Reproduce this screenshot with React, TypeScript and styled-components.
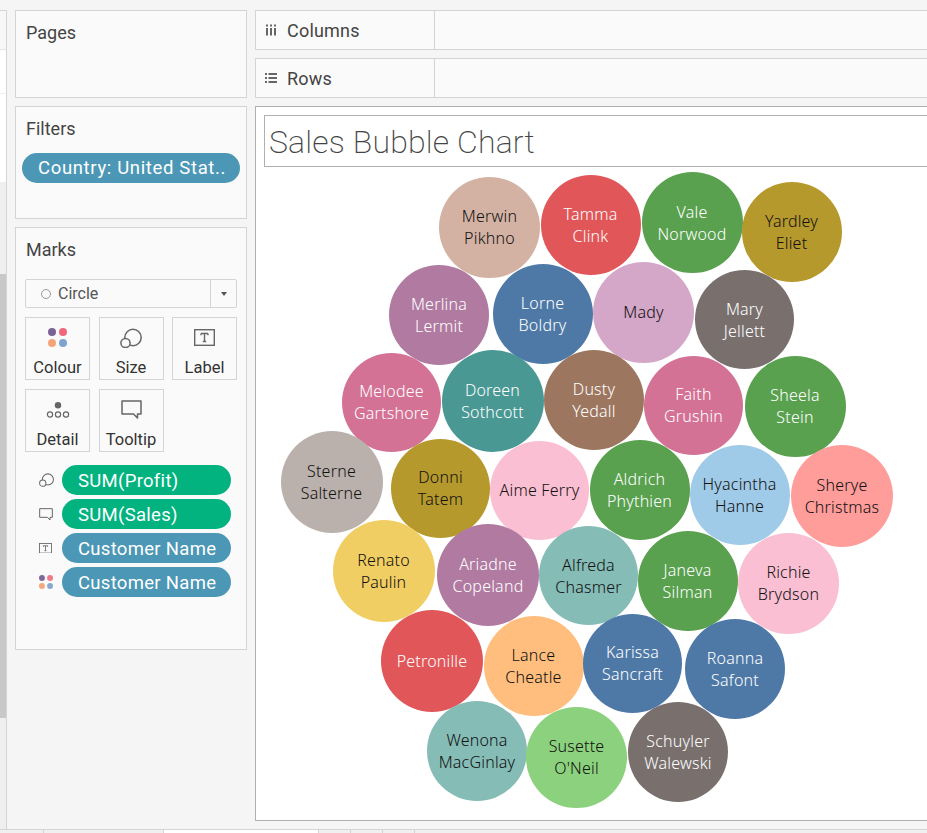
import React from "react";
import styled, { createGlobalStyle } from "styled-components";

const uiFont = `Roboto, "Liberation Sans", sans-serif`;
const chartFont = `"Noto Sans", "Open Sans", sans-serif`;

const GlobalStyle = createGlobalStyle`
	html, body {
		margin: 0;
		padding: 0;
		height: 100%;
		overflow: hidden;
		background: #f5f5f5;
	}
	* {
		box-sizing: border-box;
	}
`;

interface IBubble {
	name: string[];
	x: number;
	y: number;
	d: number;
	fill: string;
	dark?: boolean;
}

// x, y are the centres in page pixels; the chart origin is subtracted below
const bubbles: IBubble[] = [
	{ name: ["Merwin", "Pikhno"], x: 489.5, y: 227, d: 101, fill: "#d4b2a3", dark: true },
	{ name: ["Tamma", "Clink"], x: 590.5, y: 224.5, d: 100, fill: "#e15759" },
	{ name: ["Vale", "Norwood"], x: 692, y: 222.5, d: 101, fill: "#59a14f" },
	{ name: ["Yardley", "Eliet"], x: 791.5, y: 232, d: 100, fill: "#b6992d", dark: true },
	{ name: ["Merlina", "Lermit"], x: 439, y: 314.5, d: 100, fill: "#b07aa1" },
	{ name: ["Lorne", "Boldry"], x: 542.5, y: 313.5, d: 100, fill: "#4e79a7" },
	{ name: ["Mady"], x: 643.5, y: 312, d: 101, fill: "#d4a6c8", dark: true },
	{ name: ["Mary", "Jellett"], x: 744.5, y: 319.5, d: 99, fill: "#79706e" },
	{ name: ["Melodee", "Gartshore"], x: 391.5, y: 402, d: 99, fill: "#d37295" },
	{ name: ["Doreen", "Sothcott"], x: 492.5, y: 401, d: 102, fill: "#499894" },
	{ name: ["Dusty", "Yedall"], x: 594, y: 399.5, d: 100, fill: "#9d7660" },
	{ name: ["Faith", "Grushin"], x: 693.5, y: 405, d: 99, fill: "#d37295" },
	{ name: ["Sheela", "Stein"], x: 795, y: 406, d: 101, fill: "#59a14f" },
	{ name: ["Sterne", "Salterne"], x: 331.5, y: 482, d: 102, fill: "#bab0ac", dark: true },
	{ name: ["Donni", "Tatem"], x: 440.5, y: 488, d: 99, fill: "#b6992d", dark: true },
	{ name: ["Aime Ferry"], x: 539.5, y: 490, d: 99, fill: "#fabfd2", dark: true },
	{ name: ["Aldrich", "Phythien"], x: 639.5, y: 490, d: 100, fill: "#59a14f" },
	{ name: ["Hyacintha", "Hanne"], x: 739.5, y: 495, d: 100, fill: "#a0cbe8", dark: true },
	{ name: ["Sherye", "Christmas"], x: 842, y: 495.5, d: 102, fill: "#ff9d9a", dark: true },
	{ name: ["Renato", "Paulin"], x: 383.5, y: 570.5, d: 102, fill: "#f1ce63", dark: true },
	{ name: ["Ariadne", "Copeland"], x: 488, y: 575, d: 102, fill: "#b07aa1" },
	{ name: ["Alfreda", "Chasmer"], x: 588.5, y: 575.5, d: 99, fill: "#86bcb6", dark: true },
	{ name: ["Janeva", "Silman"], x: 687.5, y: 581, d: 100, fill: "#59a14f" },
	{ name: ["Richie", "Brydson"], x: 788.5, y: 583, d: 101, fill: "#fabfd2", dark: true },
	{ name: ["Petronille"], x: 432, y: 661, d: 102, fill: "#e15759" },
	{ name: ["Lance", "Cheatle"], x: 533.5, y: 666, d: 100, fill: "#ffbe7d", dark: true },
	{ name: ["Karissa", "Sancraft"], x: 632.5, y: 663, d: 99, fill: "#4e79a7" },
	{ name: ["Roanna", "Safont"], x: 735, y: 668.5, d: 100, fill: "#4e79a7" },
	{ name: ["Wenona", "MacGinlay"], x: 477, y: 750.5, d: 100, fill: "#86bcb6", dark: true },
	{ name: ["Susette", "O'Neil"], x: 576.5, y: 757, d: 101, fill: "#8cd17d", dark: true },
	{ name: ["Schuyler", "Walewski"], x: 678, y: 751.5, d: 100, fill: "#79706e" },
];

const CHART_LEFT = 256;
const CHART_TOP = 167;

const ColourDots = ({ size = 19, muted }: { size?: number; muted?: boolean }) => (
	<svg width={size} height={size} viewBox="0 0 19 19">
		<circle cx="4" cy="4" r="4" fill={muted ? "#80699a" : "#7b6294"} />
		<circle cx="15" cy="4" r="4" fill={muted ? "#f0798a" : "#f2667c"} />
		<circle cx="4" cy="15" r="4" fill={muted ? "#f5a77b" : "#f4a47a"} />
		<circle cx="15" cy="15" r="4" fill={muted ? "#8aa8cf" : "#7da4cf"} />
	</svg>
);

const SizeIcon = ({ width = 22 }: { width?: number }) => (
	<svg width={width} height={(width * 20) / 22} viewBox="0 0 22 20" fill="none" stroke="#666" strokeWidth="1.5">
		<circle cx="13" cy="9.5" r="8.2" />
		<circle cx="5.5" cy="15" r="4.6" fill="#fafafa" />
	</svg>
);

const LabelIcon = ({ width = 21 }: { width?: number }) => (
	<svg width={width} height={(width * 17) / 21} viewBox="0 0 21 17" fill="none">
		<rect x="0.7" y="0.7" width="19.6" height="15.6" stroke="#666" strokeWidth="1.4" />
		<path d="M7 4.5h7M7 4.5v1.8M14 4.5v1.8M10.5 4.5v8M8.8 12.5h3.4" stroke="#666" strokeWidth="1.4" />
	</svg>
);

const DetailIcon = () => (
	<svg width="24" height="16" viewBox="0 0 24 16" fill="none" stroke="#666" strokeWidth="1.2">
		<circle cx="12" cy="3.2" r="3.2" fill="#666" stroke="none" />
		<circle cx="4" cy="12.5" r="2.6" />
		<circle cx="12" cy="12.5" r="2.6" />
		<circle cx="20" cy="12.5" r="2.6" />
	</svg>
);

const TooltipIcon = ({ width = 21 }: { width?: number }) => (
	<svg width={width} height={(width * 19) / 21} viewBox="0 0 21 19" fill="none" stroke="#666" strokeWidth="1.5">
		<path d="M1 1h19v13h-3.5v4l-4-4H1z" strokeLinejoin="round" />
	</svg>
);

const ColumnsIcon = () => (
	<svg width="12" height="12" viewBox="0 0 12 12" fill="#666">
		<rect x="1" y="0.5" width="2" height="2" />
		<rect x="5" y="0.5" width="2" height="2" />
		<rect x="9" y="0.5" width="2" height="2" />
		<rect x="1" y="4" width="2" height="7.5" />
		<rect x="5" y="4" width="2" height="7.5" />
		<rect x="9" y="4" width="2" height="7.5" />
	</svg>
);

const RowsIcon = () => (
	<svg width="12" height="12" viewBox="0 0 12 12" fill="#666">
		<rect x="0" y="1" width="2" height="2" />
		<rect x="0" y="5" width="2" height="2" />
		<rect x="0" y="9" width="2" height="2" />
		<rect x="3.5" y="1" width="8.5" height="2" />
		<rect x="3.5" y="5" width="8.5" height="2" />
		<rect x="3.5" y="9" width="8.5" height="2" />
	</svg>
);

const markButtons = [
	{ label: "Colour", icon: <ColourDots /> },
	{ label: "Size", icon: <SizeIcon /> },
	{ label: "Label", icon: <LabelIcon /> },
	{ label: "Detail", icon: <DetailIcon /> },
	{ label: "Tooltip", icon: <TooltipIcon /> },
];

const fieldPills = [
	{ label: "SUM(Profit)", measure: true, icon: <SizeIcon width={15} /> },
	{ label: "SUM(Sales)", measure: true, icon: <TooltipIcon width={14} /> },
	{ label: "Customer Name", measure: false, icon: <LabelIcon width={13} /> },
	{ label: "Customer Name", measure: false, icon: <ColourDots size={14} muted /> },
];

const App = () => {
	return (
		<Page>
			<GlobalStyle />
			<Workspace>
				<DataStrip>
					<StripHeader />
					<StripRow height={44} />
					<StripRow height={89} />
					<StripTrack>
						<StripThumb />
					</StripTrack>
				</DataStrip>
				<Sidebar>
					<Card height={88}>
						<CardTitle>Pages</CardTitle>
					</Card>
					<Card height={113}>
						<CardTitle>Filters</CardTitle>
						<FilterPill>Country: United Stat..</FilterPill>
					</Card>
					<Card height={423}>
						<CardTitle>Marks</CardTitle>
						<MarkSelect>
							<MarkType>
								<RingDot />
								Circle
							</MarkType>
							<MarkArrow />
						</MarkSelect>
						<MarkGrid>
							{markButtons.map((b) => (
								<MarkButton key={b.label}>
									<MarkIcon>{b.icon}</MarkIcon>
									{b.label}
								</MarkButton>
							))}
						</MarkGrid>
						<FieldList>
							{fieldPills.map((p, i) => (
								<FieldRow key={i}>
									<FieldIcon>{p.icon}</FieldIcon>
									<FieldPill measure={p.measure}>{p.label}</FieldPill>
								</FieldRow>
							))}
						</FieldList>
					</Card>
				</Sidebar>
				<Main>
					<Shelf>
						<ShelfLabel>
							<ShelfIcon>
								<ColumnsIcon />
							</ShelfIcon>
							Columns
						</ShelfLabel>
					</Shelf>
					<Shelf>
						<ShelfLabel>
							<ShelfIcon>
								<RowsIcon />
							</ShelfIcon>
							Rows
						</ShelfLabel>
					</Shelf>
					<View>
						<Title>Sales Bubble Chart</Title>
						<Chart>
							{bubbles.map((b) => (
								<Bubble
									key={b.name.join(" ")}
									dark={b.dark}
									style={{
										left: b.x - b.d / 2 - CHART_LEFT,
										top: b.y - b.d / 2 - CHART_TOP,
										width: b.d,
										height: b.d,
										background: b.fill,
									}}
								>
									{b.name.map((line) => (
										<span key={line}>{line}</span>
									))}
								</Bubble>
							))}
						</Chart>
					</View>
				</Main>
			</Workspace>
			<TabBar>
				<Tab width={44} />
				<Tab width={120} />
				<Tab width={155} active />
				<Tab width={32} />
				<Tab width={32} />
				<Tab width={32} />
			</TabBar>
		</Page>
	);
};

export default App;

const Page = styled.div`
	width: 927px;
	height: 833px;
	overflow: hidden;
	display: flex;
	flex-direction: column;
	font-family: ${uiFont};
	color: #333;
`;

const Workspace = styled.div`
	flex: 1;
	display: flex;
	min-height: 0;
`;

const DataStrip = styled.div`
	width: 7px;
	flex: none;
	margin-top: 10px;
	background: #efefef;
	border-top: 1px solid #d4d4d4;
	border-right: 1px solid #d4d4d4;
	display: flex;
	flex-direction: column;
`;

const StripHeader = styled.div`
	height: 39px;
	flex: none;
	background: #f7f7f7;
	border-bottom: 1px solid #e6e6e6;
`;

const StripRow = styled.div<{ height: number }>`
	height: ${(props) => props.height}px;
	flex: none;
	background: #fff;
	border-bottom: 1px solid #f0f0f0;
`;

const StripTrack = styled.div`
	flex: 1;
	padding-top: 91px;
`;

const StripThumb = styled.div`
	height: 444px;
	background: #c8c8c8;
`;

const Sidebar = styled.aside`
	width: 232px;
	flex: none;
	margin: 10px 0 0 8px;
	display: flex;
	flex-direction: column;
	gap: 8px;
`;

const Card = styled.section<{ height: number }>`
	height: ${(props) => props.height}px;
	background: #fafafa;
	border: 1px solid #d4d4d4;
	padding: 10px 9px;
`;

const CardTitle = styled.h2`
	margin: 0;
	padding: 1px 0 0 1px;
	font-size: 18px;
	font-weight: 400;
	line-height: 22px;
	color: #444;
`;

const FilterPill = styled.div`
	margin: 13px 0 0 -3px;
	width: 218px;
	height: 30px;
	border-radius: 15px;
	background: #4b97b5;
	color: #fff;
	font-size: 18.5px;
	letter-spacing: 0.65px;
	line-height: 30px;
	padding-left: 16px;
	white-space: nowrap;
`;

const MarkSelect = styled.div`
	margin-top: 18px;
	height: 29px;
	width: 212px;
	display: flex;
	border: 1px solid #d4d4d4;
	border-radius: 2px;
`;

const MarkType = styled.div`
	flex: 1;
	display: flex;
	align-items: center;
	gap: 7px;
	padding-left: 15px;
	font-size: 16px;
	color: #555;
`;

const RingDot = styled.span`
	width: 10px;
	height: 10px;
	border: 1.5px solid #999;
	border-radius: 50%;
`;

const MarkArrow = styled.div`
	width: 26px;
	border-left: 1px solid #d4d4d4;
	display: flex;
	align-items: center;
	justify-content: center;

	&::after {
		content: "";
		border-left: 3.5px solid transparent;
		border-right: 3.5px solid transparent;
		border-top: 4px solid #555;
	}
`;

const MarkGrid = styled.div`
	margin-top: 9px;
	width: 212px;
	display: grid;
	grid-template-columns: 65px 65px 65px;
	grid-auto-rows: 63px;
	column-gap: 8.5px;
	row-gap: 9px;
`;

const MarkButton = styled.div`
	border: 1px solid #d4d4d4;
	display: flex;
	flex-direction: column;
	align-items: center;
	font-size: 16.5px;
	line-height: 20px;
	color: #333;
`;

const MarkIcon = styled.div`
	height: 40px;
	padding-bottom: 1px;
	display: flex;
	align-items: center;
	justify-content: center;
`;

const FieldList = styled.div`
	margin-top: 13px;
	display: flex;
	flex-direction: column;
	gap: 4px;
`;

const FieldRow = styled.div`
	display: flex;
	align-items: center;
	height: 30px;
	padding-left: 14px;
`;

const FieldIcon = styled.div`
	width: 23px;
	display: flex;
	align-items: center;
`;

const FieldPill = styled.div<{ measure: boolean }>`
	width: 169px;
	height: 30px;
	border-radius: 15px;
	background: ${(props) => (props.measure ? "#02b380" : "#4b97b5")};
	color: #fff;
	font-size: 18.5px;
	letter-spacing: 0.3px;
	line-height: 30px;
	padding: 1px 0 0 16px;
	white-space: nowrap;
`;

const Main = styled.main`
	flex: none;
	width: 700px;
	margin: 10px 0 0 8px;
	display: flex;
	flex-direction: column;
	gap: 8px;
`;

const Shelf = styled.div`
	height: 40px;
	flex: none;
	background: #fafafa;
	border: 1px solid #d4d4d4;
`;

const ShelfLabel = styled.div`
	width: 179px;
	height: 100%;
	display: flex;
	align-items: center;
	border-right: 1px solid #d4d4d4;
	font-size: 18px;
	letter-spacing: 0.2px;
	color: #444;
`;

const ShelfIcon = styled.span`
	width: 31px;
	padding-left: 9px;
	display: flex;
	align-items: center;
`;

const View = styled.div`
	height: 715px;
	flex: none;
	background: #fff;
	border: 1px solid #b0b0b0;
	padding: 8px;
	display: flex;
	flex-direction: column;
`;

const Title = styled.h1`
	margin: 0;
	height: 52px;
	flex: none;
	border: 1px solid #b0b0b0;
	padding-left: 4px;
	font-family: ${uiFont};
	font-size: 32px;
	font-weight: 200;
	letter-spacing: 0.17px;
	line-height: 52px;
	color: #444;
	white-space: nowrap;
`;

const Chart = styled.div`
	position: relative;
	flex: 1;
	margin: 0 -8px -8px;
`;

const Bubble = styled.div<{ dark?: boolean }>`
	position: absolute;
	border-radius: 50%;
	display: flex;
	flex-direction: column;
	align-items: center;
	justify-content: center;
	font-family: ${chartFont};
	font-size: 16px;
	font-weight: 300;
	letter-spacing: 0.2px;
	line-height: 22px;
	white-space: nowrap;
	color: ${(props) => (props.dark ? "#111" : "#fff")};
`;

const TabBar = styled.footer`
	height: 4px;
	flex: none;
	display: flex;
	background: #f0f0f0;
	border-top: 1px solid #d4d4d4;
`;

const Tab = styled.div<{ width: number; active?: boolean }>`
	width: ${(props) => props.width}px;
	background: ${(props) => (props.active ? "#fff" : "transparent")};
	border-right: 1px solid #d4d4d4;
`;
